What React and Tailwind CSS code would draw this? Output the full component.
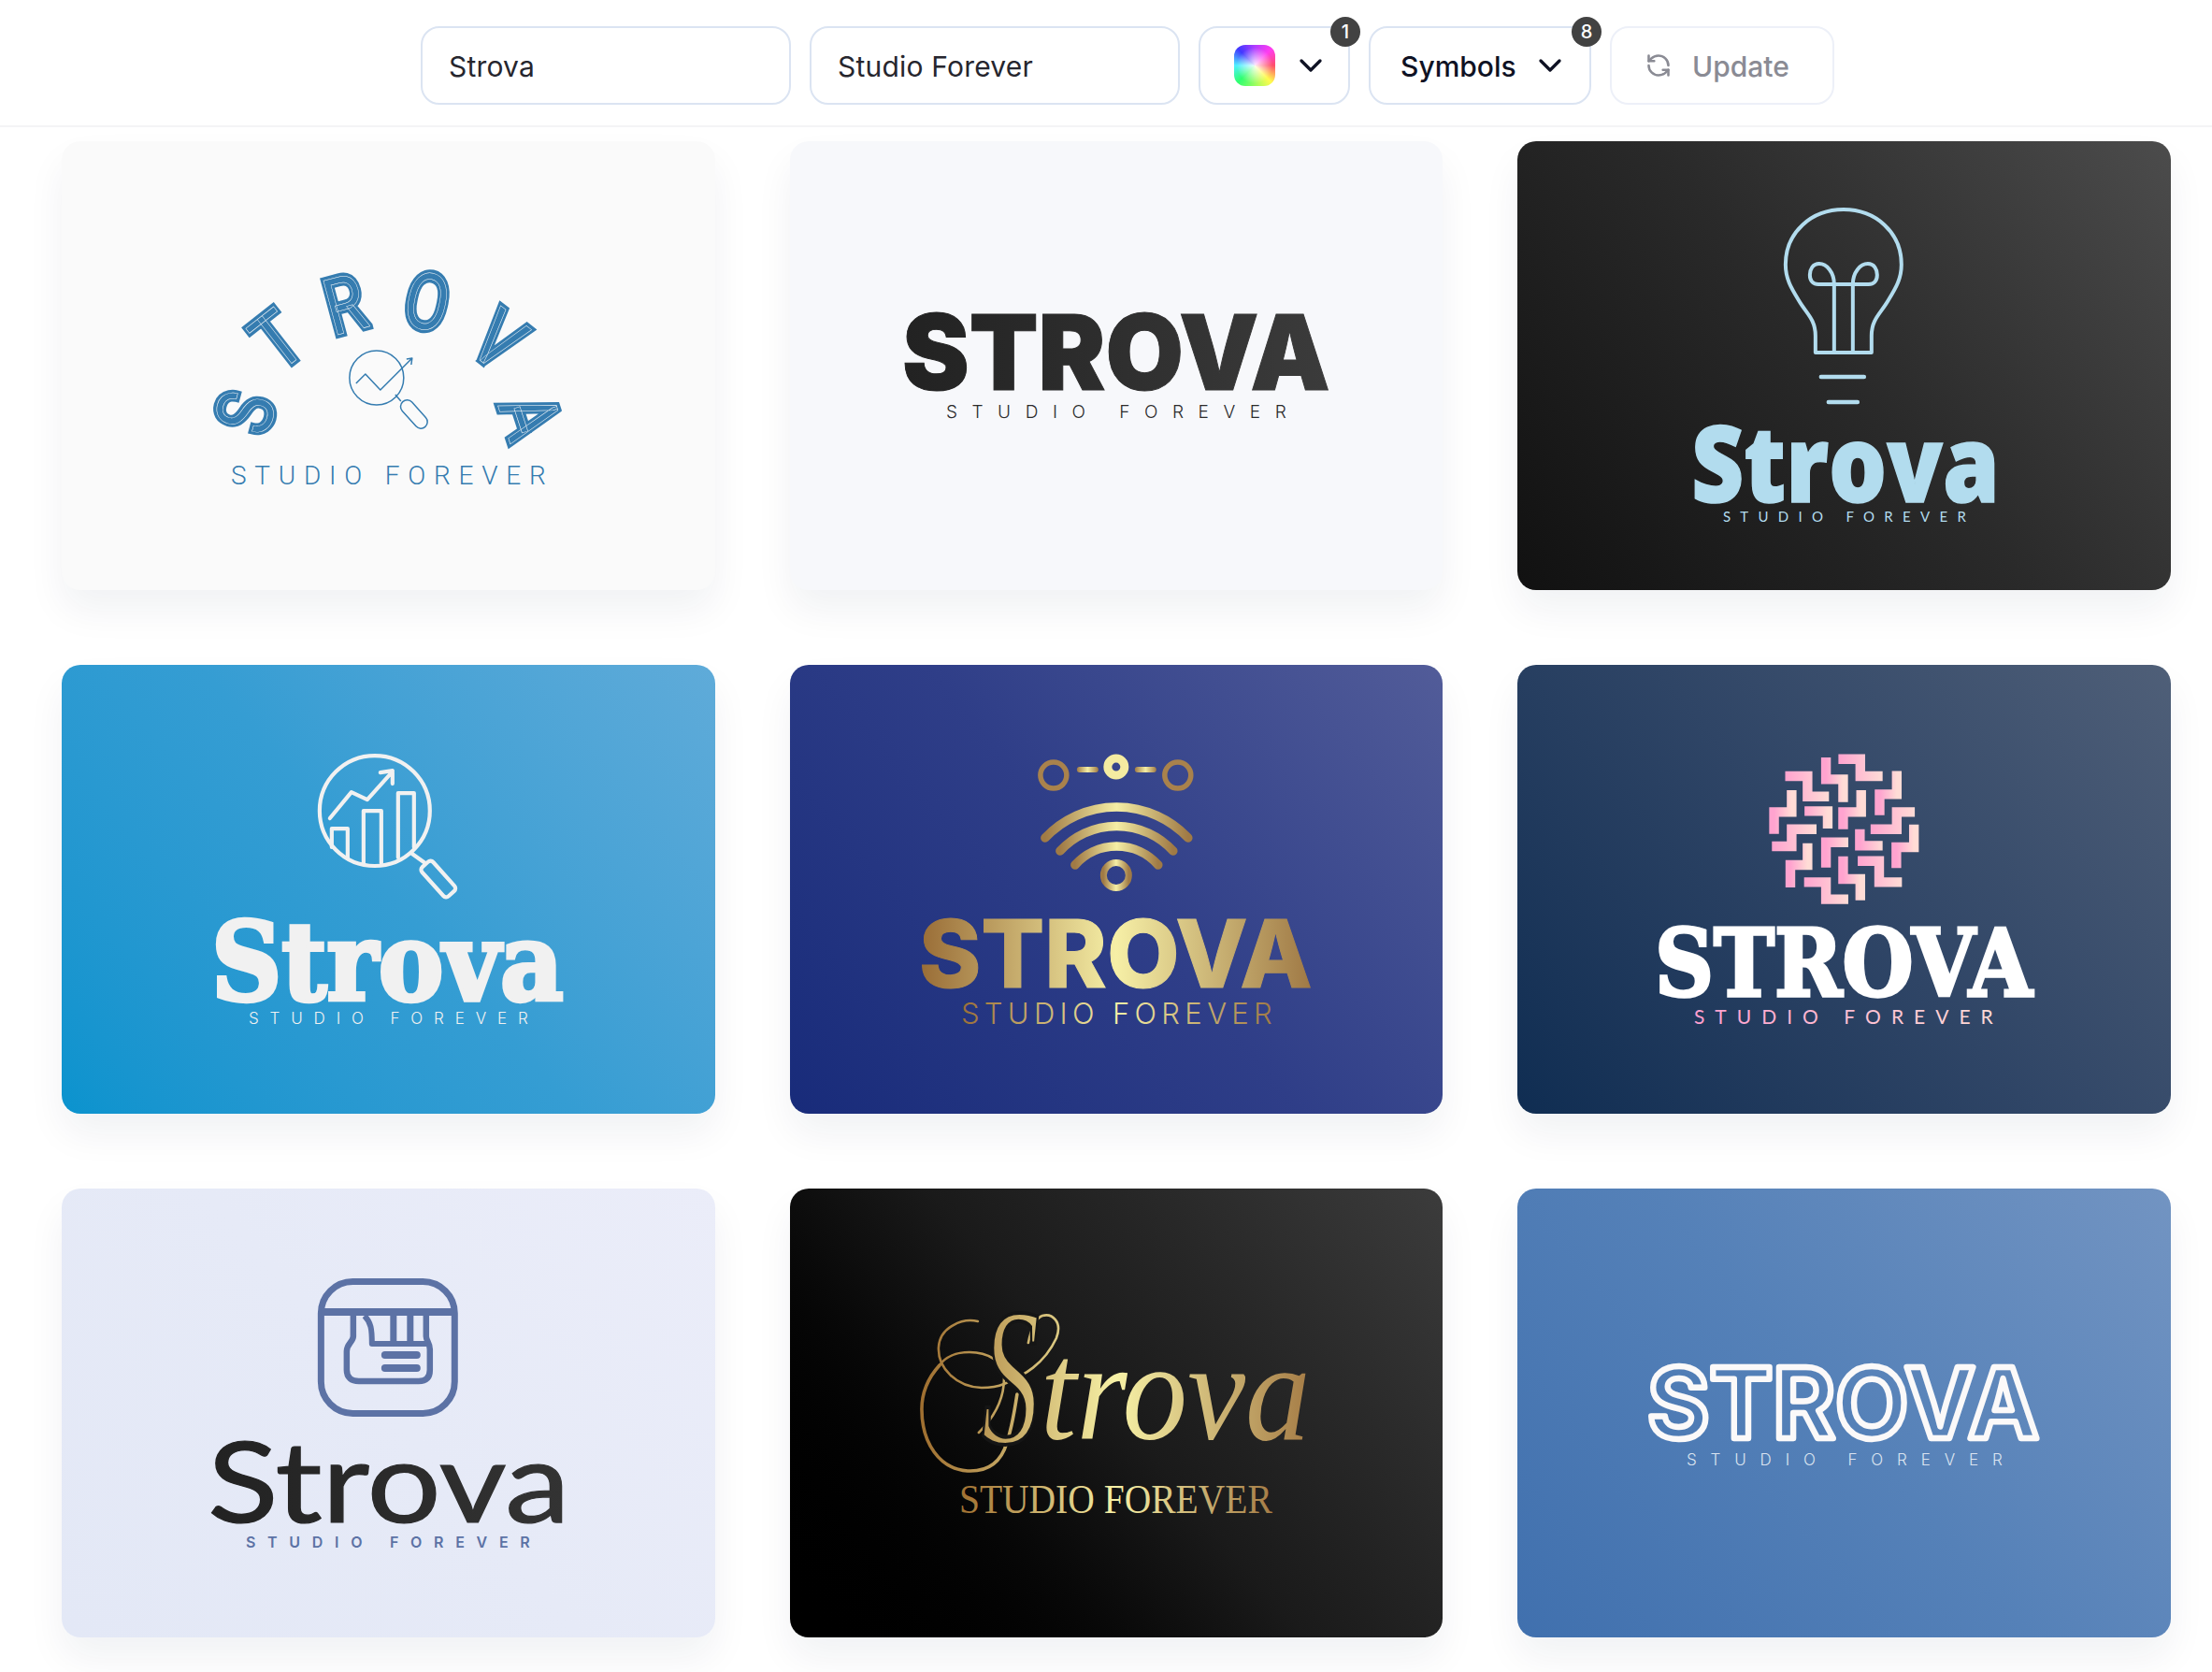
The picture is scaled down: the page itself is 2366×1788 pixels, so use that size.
import React from "react";
import { ChevronDown, RefreshCcw } from "lucide-react";

const UI_FONT = "font-['Inter',sans-serif]";

const Badge = ({ children, className }) => (
  <span
    className={`absolute -top-[12px] flex h-[32px] w-[32px] items-center justify-center rounded-full bg-[#424242] text-[20px] font-medium text-white ${className}`}
  >
    {children}
  </span>
);

const Card = ({ className, children }) => (
  <div
    className={`h-[480px] overflow-hidden rounded-[20px] shadow-[0_22px_40px_rgba(20,30,60,0.06)] ${className}`}
  >
    <svg viewBox="0 0 699 480" className="block h-full w-full">
      {children}
    </svg>
  </div>
);

const Sub = ({ x, y, w, size, fill, weight = 300, font = "Inter, sans-serif", adjust = "spacing" }) => (
  <text
    x={x}
    y={y}
    textLength={w}
    lengthAdjust={adjust}
    fontFamily={font}
    fontSize={size}
    fontWeight={weight}
    fill={fill}
  >
    STUDIO FOREVER
  </text>
);

const Gold = ({ id, x1, x2, start = "#9a6e38", mid = "#f6efa6", end = "#a07a46" }) => (
  <linearGradient id={id} gradientUnits="userSpaceOnUse" x1={x1} x2={x2} y1="0" y2="0">
    <stop offset="0" stopColor={start} />
    <stop offset="0.5" stopColor={mid} />
    <stop offset="1" stopColor={end} />
  </linearGradient>
);

const arched = [
  { ch: "S", x: 196, y: 290, r: -75 },
  { ch: "T", x: 230, y: 212, r: -38 },
  { ch: "R", x: 303, y: 174, r: -15 },
  { ch: "O", x: 391, y: 171, r: 12 },
  { ch: "V", x: 468, y: 212, r: 38 },
  { ch: "A", x: 502, y: 294, r: 72 },
];

const AnalyticsLogo = () => (
  <>
    {arched.map((l) => (
      <g key={l.ch} transform={`translate(${l.x} ${l.y}) rotate(${l.r}) scale(0.82 1)`}>
        <text
          y="30"
          textAnchor="middle"
          fontFamily="Roboto, sans-serif"
          fontSize="84"
          fontWeight="400"
          fill="#357cb0"
          stroke="#357cb0"
          strokeWidth="7.5"
        >
          {l.ch}
        </text>
        <text
          y="30"
          textAnchor="middle"
          fontFamily="Roboto, sans-serif"
          fontSize="84"
          fontWeight="400"
          fill="none"
          stroke="#fafafa"
          strokeWidth="0.5"
          aria-hidden="true"
        >
          {l.ch}
        </text>
      </g>
    ))}
    <g fill="none" stroke="#357cb0" strokeWidth="1.5" strokeLinejoin="round">
      <circle cx="337" cy="253" r="29" />
      <path d="M315 259 L325 249 L341 266 L375 232 M369 233 L375 232 L374 239" />
      <path d="M357 271 L363 278" />
      <rect x="-7" y="-18" width="14" height="36" rx="7" transform="translate(377 292) rotate(-42)" />
    </g>
    <Sub x={181} y={367} w={337} size={28} fill="#357cb0" font="Roboto, sans-serif" weight={350} />
  </>
);

const BulbLogo = () => (
  <>
    <g fill="none" stroke="#b2dcee" strokeWidth="4" strokeLinecap="round" strokeLinejoin="round">
      <path d="M319 226 V208 C319 190 309 184 301 170 C293 157 287 147 287 132 C287 97 315 73 349 73 C383 73 411 97 411 132 C411 147 405 157 397 170 C389 184 379 190 379 208 V226 Z" />
      <path d="M339 153 C339 140 331 131 323 131 C316 131 313 137 313 143 C313 150 317 153 322 153 H376 C381 153 385 150 385 143 C385 137 382 131 375 131 C367 131 359 140 359 153" />
      <path d="M339 153 V226 M359 153 V226" />
      <path d="M325 252 H371 M333 279 H364" strokeWidth="4.5" />
    </g>
    <text x="186" y="386" textLength="330" lengthAdjust="spacingAndGlyphs" fontFamily="'Open Sans', sans-serif" fontSize="114" fontWeight="800" fill="#b2dcee" stroke="#b2dcee" strokeWidth="1.5">
      Strova
    </text>
    <Sub x={220} y={407} w={260} size={15} fill="#b2dcee" font="Lato, sans-serif" weight={400} />
  </>
);

const SearchChartLogo = () => (
  <>
    <g fill="none" stroke="#f1f1f1" strokeWidth="4.2" strokeLinecap="round" strokeLinejoin="round">
      <circle cx="335" cy="156" r="59" />
      <path d="M287 164 L310 136 L327 144 L354 114 M341 115 L354 113 L354 127" />
      <path d="M289 195 V175 H306 V207 M323 212 V156 H342 V212 M360 206 V137 H377 V195" />
      <path d="M375 202 L389 212" />
      <rect x="-8" y="-21" width="16" height="42" rx="4" transform="translate(403 229) rotate(-42)" />
    </g>
    <text x="160" y="358" textLength="377" lengthAdjust="spacingAndGlyphs" fontFamily="'DejaVu Serif', serif" fontSize="116" fontWeight="700" fill="#f1f1f1" stroke="#f1f1f1" strokeWidth="4.5">
      Strova
    </text>
    <Sub x={200} y={384} w={299} size={17} fill="#f1f1f1" />
  </>
);

const WifiLogo = () => (
  <>
    <defs>
      <Gold id="goldWord" x1={142} x2={556} />
      <Gold id="goldSub" x1={183} x2={516} />
      <linearGradient id="goldIcon" x1="0" x2="1" y1="0" y2="0">
        <stop offset="0" stopColor="#a07a45" />
        <stop offset="0.5" stopColor="#f5eea5" />
        <stop offset="1" stopColor="#a07a45" />
      </linearGradient>
    </defs>
    <g fill="none" strokeLinecap="round">
      <circle cx="282" cy="118" r="14" stroke="#a9824c" strokeWidth="5.5" />
      <circle cx="415" cy="118" r="14" stroke="#a9824c" strokeWidth="5.5" />
      <circle cx="349" cy="109" r="9" stroke="#f4eba1" strokeWidth="9" />
      <path d="M273 185 A105 105 0 0 1 426 185" stroke="url(#goldIcon)" strokeWidth="9.5" />
      <path d="M289 199 A82 82 0 0 1 410 199" stroke="url(#goldIcon)" strokeWidth="9.5" />
      <path d="M305 214 A59.5 59.5 0 0 1 394 214" stroke="url(#goldIcon)" strokeWidth="9.5" />
      <circle cx="349" cy="225" r="13.5" stroke="url(#goldIcon)" strokeWidth="7" />
    </g>
    <rect x="307" y="109" width="23" height="6" rx="3" fill="url(#goldIcon)" />
    <rect x="369" y="109" width="23" height="6" rx="3" fill="url(#goldIcon)" />
    <text x="138" y="345" textLength="421" lengthAdjust="spacingAndGlyphs" fontFamily="Inter, sans-serif" fontSize="100" fontWeight="800" fill="url(#goldWord)" stroke="url(#goldWord)" strokeWidth="1">
      STROVA
    </text>
    <Sub x={183} y={384} w={333} size={31} fill="url(#goldSub)" />
  </>
);

// centre lines of the maze tiles, read from the reference at zoom scale
const mazeTiles = [
  [[757, 305], [808, 305], [808, 360], [860, 360]],
  [[728, 300], [728, 370], [768, 370], [768, 443]],
  [[633, 360], [685, 360], [685, 425], [735, 425]],
  [[893, 343], [893, 418], [853, 418], [853, 485]],
  [[648, 405], [648, 475], [607, 475], [607, 545]],
  [[678, 472], [732, 472], [732, 528]],
  [[810, 405], [810, 475], [768, 475], [768, 530]],
  [[935, 475], [893, 475], [893, 530], [832, 530]],
  [[706, 530], [648, 530], [648, 585], [602, 585]],
  [[933, 515], [933, 588], [892, 588], [892, 655]],
  [[807, 530], [807, 583], [860, 583]],
  [[780, 572], [728, 572], [728, 653]],
  [[685, 575], [685, 645], [645, 645], [645, 717]],
  [[768, 617], [768, 690], [808, 690], [808, 758]],
  [[802, 632], [852, 632], [852, 700], [905, 700]],
  [[677, 700], [728, 700], [728, 755], [780, 755]],
];

const MazeLogo = () => (
  <>
    <defs>
      <linearGradient id="pinkTile" x1="0" x2="1" y1="0" y2="0">
        <stop offset="0" stopColor="#ffa3cf" />
        <stop offset="1" stopColor="#ffdcd6" />
      </linearGradient>
      <linearGradient id="pinkSub" gradientUnits="userSpaceOnUse" x1="189" x2="509" y1="0" y2="0">
        <stop offset="0" stopColor="#ff9fcf" />
        <stop offset="1" stopColor="#ffdcd6" />
      </linearGradient>
    </defs>
    <g fill="none" stroke="url(#pinkTile)" strokeWidth="10.4">
      {mazeTiles.map((tile, i) => (
        <polyline key={i} points={tile.map(([x, y]) => `${x / 2.178 - 4},${y / 3 - 1}`).join(" ")} />
      ))}
    </g>
    <text x="147" y="354" textLength="404" lengthAdjust="spacingAndGlyphs" fontFamily="'DejaVu Serif', serif" fontSize="100" fontWeight="700" fill="#ffffff" stroke="#ffffff" strokeWidth="3.5">
      STROVA
    </text>
    <Sub x={189} y={384} w={320} size={21} fill="url(#pinkSub)" font="Lato, sans-serif" weight={400} />
  </>
);

const AppLogo = () => (
  <>
    <defs>
      <linearGradient id="slateWord" gradientUnits="userSpaceOnUse" x1="160" x2="538" y1="0" y2="0">
        <stop offset="0" stopColor="#222222" />
        <stop offset="1" stopColor="#333333" />
      </linearGradient>
    </defs>
    <g fill="none" stroke="#5c72a5" strokeWidth="7" strokeLinecap="round" strokeLinejoin="round">
      <rect x="277.5" y="99.5" width="143" height="141" rx="34" />
      <path d="M278 132 H420" strokeLinecap="butt" strokeWidth="8" />
      <path d="M312 134 V158 C312 164 305 166 305 174 L305 194 C305 202 310 206 318 206 H382 C390 206 394 202 394 194 V172 C394 165 390 163 390 158 V134" strokeWidth="6.5" strokeLinecap="butt" />
      <path d="M324 136 C331 143 332 150 332 166 H392" strokeWidth="6" strokeLinecap="butt" />
      <path d="M355 134 V166 M373 134 V166" strokeLinecap="butt" />
      <path d="M346 178 H380 M346 192 H380" strokeWidth="8" />
    </g>
    <text x="156" y="357" textLength="388" lengthAdjust="spacingAndGlyphs" fontFamily="Lato, sans-serif" fontSize="120" fontWeight="400" fill="url(#slateWord)" stroke="url(#slateWord)" strokeWidth="1.2">
      Strova
    </text>
    <Sub x={197} y={384} w={304} size={16} fill="#5c72a5" weight={600} />
  </>
);

const ScriptLogo = () => (
  <>
    <defs>
      <Gold id="scriptWord" x1={141} x2={557} start="#9f6f30" mid="#f7f1a6" end="#a57c46" />
      <Gold id="scriptSub" x1={181} x2={516} start="#9f6f30" mid="#f7f1a6" end="#a57c46" />
    </defs>
    <g fill="none" stroke="url(#scriptWord)" strokeWidth="2.6" strokeLinecap="round">
      <path d="M201 142 C185 138 160 148 159 170 C158 192 178 212 205 213 C212 213 222 212 229 209 C250 200 272 188 285 160 C292 142 280 133 270 136 C262 139 258 150 255 165" />
      <path d="M202 261 C218 245 230 225 229 200 C228 185 212 175 192 175 C178 175 166 180 160 189" />
      <path d="M160 189 C150 200 141 215 141 236 C141 272 160 300 190 302 C212 303 226 292 232 272 C236 260 240 240 243 220" strokeWidth="3.6" />
    </g>
    <text fontFamily="'Liberation Serif', serif" fontStyle="italic" fill="url(#scriptWord)">
      <tspan x="205" y="272" fontSize="210" textLength="62" lengthAdjust="spacingAndGlyphs" stroke="#151515" strokeWidth="4">S</tspan>
      <tspan x="268" y="268" fontSize="150" textLength="289" lengthAdjust="spacingAndGlyphs">trova</tspan>
    </text>
    <Sub x={181} y={347} w={335} size={44} fill="url(#scriptSub)" font="'Liberation Serif', serif" weight={400} adjust="spacingAndGlyphs" />
  </>
);

const InlineLogo = () => (
  <>
    <text x="139" y="267" textLength="419" lengthAdjust="spacingAndGlyphs" fontFamily="Inter, sans-serif" fontSize="104" fontWeight="700" fill="none" stroke="#fbf9f9" strokeWidth="6.5" strokeLinejoin="round">
      STROVA
    </text>
    <Sub x={181} y={296} w={338} size={17} fill="#dbe4f0" />
  </>
);

const App = () => {
  return (
    <div className={`min-h-[1788px] bg-white pb-[37px] ${UI_FONT}`}>
      <header className="flex h-[136px] items-start justify-center gap-[20px] border-b-2 border-[#f4f4f6] pt-[28px] pl-[46px]">
        <div className="flex h-[84px] w-[396px] items-center rounded-[20px] border-2 border-[#dbe4f2] pt-[2px] pl-[28px] text-[30px] tracking-[0.2px] text-[#26262e]">
          Strova
        </div>
        <div className="flex h-[84px] w-[396px] items-center rounded-[20px] border-2 border-[#dbe4f2] pt-[2px] pl-[28px] text-[30px] tracking-[0.2px] text-[#26262e]">
          Studio Forever
        </div>
        <button className="relative flex h-[84px] w-[162px] items-center rounded-[20px] border-2 border-[#dbe4f2] pl-[36px]">
          <span className="h-[44px] w-[44px] rounded-[12px] bg-[radial-gradient(circle_at_center,rgba(255,255,255,0.9),rgba(255,255,255,0)_62%),conic-gradient(from_0deg,#b03cff,#ff3cf0_45deg,#ff4f6a_90deg,#fffb4f_135deg,#30ff70_225deg,#4ff0ff_270deg,#4038ff_315deg,#b03cff)]" />
          <ChevronDown size={40} strokeWidth={2} className="ml-[18px] text-[#0f1224]" />
          <Badge className="-right-[13px]">1</Badge>
        </button>
        <button className="relative flex h-[84px] w-[238px] items-center rounded-[20px] border-2 border-[#dbe4f2] pl-[32px] text-[30px] font-medium text-[#0f1224]">
          <span className="pt-[2px]">Symbols</span>
          <ChevronDown size={40} strokeWidth={2} className="ml-[16px]" />
          <Badge className="-right-[13px]">8</Badge>
        </button>
        <button className="flex h-[84px] w-[240px] items-center rounded-[20px] border-2 border-[#edf0f8] pl-[36px] text-[30px] font-medium text-[#8a8b94]">
          <RefreshCcw size={28} strokeWidth={2.2} />
          <span className="ml-[22px] pt-[2px]">Update</span>
        </button>
      </header>

      <main className="grid w-[2322px] grid-cols-3 gap-[80px] pt-[15px] pl-[66px]">
        <Card className="bg-[#fafafa]">
          <AnalyticsLogo />
        </Card>
        <Card className="bg-[#f7f8fb]">
          <defs>
            <linearGradient id="inkWord" gradientUnits="userSpaceOnUse" x1="123" x2="576" y1="0" y2="0">
              <stop offset="0" stopColor="#222222" />
              <stop offset="1" stopColor="#3b3b3b" />
            </linearGradient>
          </defs>
          <text x="120" y="266" textLength="458" lengthAdjust="spacingAndGlyphs" fontFamily="Inter, sans-serif" fontSize="112" fontWeight="900" fill="url(#inkWord)" stroke="url(#inkWord)" strokeWidth="1">
            STROVA
          </text>
          <Sub x={167} y={296} w={364} size={19} fill="#2b2b2b" />
        </Card>
        <Card className="bg-linear-50 from-[#111111] via-[#2a2a2a] to-[#4c4c4c]">
          <BulbLogo />
        </Card>
        <Card className="bg-linear-50 from-[#0a93ce] via-[#359dd3] to-[#5fabd9]">
          <SearchChartLogo />
        </Card>
        <Card className="bg-linear-50 from-[#182b7a] via-[#2f3e88] to-[#525c99]">
          <WifiLogo />
        </Card>
        <Card className="bg-linear-50 from-[#0f2d52] via-[#2f4566] to-[#4f5f78]">
          <MazeLogo />
        </Card>
        <Card className="bg-linear-50 from-[#e3e8f6] via-[#e6eaf7] to-[#ebedf9]">
          <AppLogo />
        </Card>
        <Card className="bg-linear-50 from-[#000000] via-[#1a1a1a] to-[#3c3c3c]">
          <ScriptLogo />
        </Card>
        <Card className="bg-linear-50 from-[#4070ae] via-[#5581b8] to-[#7294c2]">
          <InlineLogo />
        </Card>
      </main>
    </div>
  );
};

export default App;
